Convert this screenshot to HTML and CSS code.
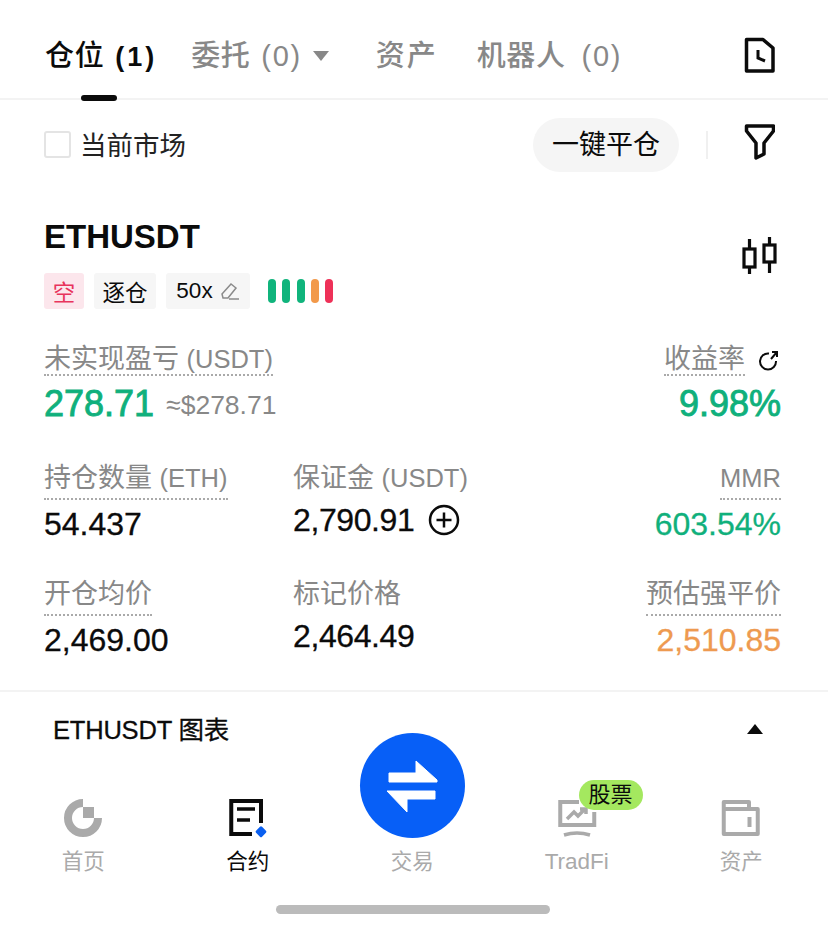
FILE: index.html
```html
<!DOCTYPE html>
<html lang="zh-CN">
<head>
    <meta charset="UTF-8" />
    <meta name="viewport" content="width=device-width, initial-scale=1.0" />
    <title>仓位</title>
    <link rel="stylesheet" href="styles.css">
</head>
<body>
    <div class="screen">
        <div class="tabs">
            <div class="tab tab-active">仓位 <b>(1)</b></div>
            <div class="tab tab-order">委托 <span class="count">(0)</span> <span class="caret"></span></div>
            <div class="tab tab-assets">资产</div>
            <div class="tab tab-bot">机器人 <span class="count">(0)</span></div>
            <svg class="tab-history" width="32" height="38" viewBox="0 0 32 38" fill="none" stroke="#0b0b0b" stroke-width="3.5">
                <path d="M3.5 4.5H20L30 13V36H3.5Z" stroke-linejoin="round"/>
                <path d="M15 15V23L22 26" stroke-width="3"/>
            </svg>
        </div>

        <div class="toolbar">
            <label class="check"><span class="check-box"></span><span class="check-text">当前市场</span></label>
            <div class="pill">一键平仓</div>
            <span class="toolbar-sep"></span>
            <svg class="filter" width="32" height="38" viewBox="0 0 32 38" fill="none" stroke="#0b0b0b" stroke-width="3.5" stroke-linejoin="round">
                <path d="M3.5 3H30.5V8L21 20V31L13 35V20L3.5 8Z"/>
            </svg>
        </div>

        <section class="position">
            <div class="symbol-row">
                <div>
                    <h2 class="symbol">ETHUSDT</h2>
                    <div class="tags">
                        <span class="tag tag-short">空</span>
                        <span class="tag tag-margin">逐仓</span>
                        <span class="tag tag-lev">50x
                            <svg width="20" height="20" viewBox="0 0 20 20" fill="none" stroke="#8a8a8a" stroke-width="1.5">
                                <path d="M2 13L11 3L16 7L8 17H3ZM9 18H19"/>
                            </svg>
                        </span>
                        <span class="risk">
                            <i class="g"></i><i class="g"></i><i class="g"></i><i class="o"></i><i class="r"></i>
                        </span>
                    </div>
                </div>
                <svg class="candles" width="36" height="38" viewBox="0 0 36 38" fill="none" stroke="#0b0b0b" stroke-width="3.2">
                    <rect x="2" y="12" width="11" height="18"/>
                    <path d="M7.5 2V12M7.5 30V37"/>
                    <rect x="22" y="8" width="11" height="17"/>
                    <path d="M27.5 0V8M27.5 25V36"/>
                </svg>
            </div>

            <div class="pnl">
                <div>
                    <span class="label dotted">未实现盈亏 <span class="unit">(USDT)</span></span>
                    <div class="pnl-val"><span class="big green">278.71</span><span class="approx">≈$278.71</span></div>
                </div>
                <div class="right">
                    <div class="roe-head">
                        <span class="label dotted">收益率</span>
                        <svg width="22" height="22" viewBox="0 0 22 22" fill="none" stroke="#0b0b0b" stroke-width="2">
                            <path d="M12 3.5A8 8 0 1 0 19 11M14 9L20 2M15 2H20V7"/>
                        </svg>
                    </div>
                    <div class="big green">9.98%</div>
                </div>
            </div>

            <div class="stats">
                <div class="stat">
                    <span class="label dotted">持仓数量 <span class="unit">(ETH)</span></span>
                    <div class="value">54.437</div>
                </div>
                <div class="stat">
                    <span class="label">保证金 <span class="unit">(USDT)</span></span>
                    <div class="value value-plain">2,790.91
                        <svg class="plus" width="32" height="32" viewBox="0 0 32 32" fill="none" stroke="#0b0b0b" stroke-width="2.5">
                            <circle cx="16" cy="16" r="14"/>
                            <path d="M16 8.5V23.5M8.5 16H23.5"/>
                        </svg>
                    </div>
                </div>
                <div class="stat right">
                    <span class="label dotted"><span class="unit">MMR</span></span>
                    <div class="value green">603.54%</div>
                </div>
                <div class="stat">
                    <span class="label dotted">开仓均价</span>
                    <div class="value">2,469.00</div>
                </div>
                <div class="stat">
                    <span class="label">标记价格</span>
                    <div class="value value-plain">2,464.49</div>
                </div>
                <div class="stat right">
                    <span class="label dotted">预估强平价</span>
                    <div class="value orange">2,510.85</div>
                </div>
            </div>
        </section>

        <div class="chart-row">
            <span class="chart-title">ETHUSDT 图表</span>
            <span class="chart-caret"></span>
        </div>

        <nav class="nav">
            <div class="nav-item">
                <svg width="40" height="40" viewBox="0 0 40 40" fill="none">
                    <path d="M20 5A15 15 0 1 0 35 20" stroke="#aaa" stroke-width="8"/>
                    <rect x="20" y="9" width="11" height="11" fill="#aaa"/>
                </svg>
                <span>首页</span>
            </div>
            <div class="nav-item nav-active">
                <svg width="40" height="40" viewBox="0 0 40 40" fill="none">
                    <path d="M24 36H3.25V3H33V25" stroke="#0b0b0b" stroke-width="4"/>
                    <path d="M9 11H27M9 22H22" stroke="#0b0b0b" stroke-width="3.5"/>
                    <rect x="28.75" y="29.5" width="8.5" height="8.5" rx="1.5" transform="rotate(45 33 33.75)" fill="#0a5ff0"/>
                </svg>
                <span>合约</span>
            </div>
            <div class="nav-item">
                <div class="trade-btn">
                    <svg width="52" height="56" viewBox="0 0 52 56" fill="#fff" stroke="#fff" stroke-linejoin="round">
                        <path d="M3 24H51V22L30 3V15H3ZM1 33H49V41H21V54Z"/>
                    </svg>
                </div>
                <span>交易</span>
            </div>
            <div class="nav-item nav-tradfi">
                <svg width="40" height="40" viewBox="0 0 40 40" fill="none" stroke="#aaa" stroke-width="4">
                    <path d="M22 4H3.25V27H37.25V14"/>
                    <path d="M7 37Q20 33 33 37" stroke-width="3.5"/>
                    <path d="M10 21L17 14L21 18L27 12M23 11H29V16" stroke-width="3.5"/>
                </svg>
                <span>TradFi</span>
                <em class="badge">股票</em>
            </div>
            <div class="nav-item">
                <svg width="40" height="40" viewBox="0 0 40 40" fill="none" stroke="#aaa" stroke-width="4">
                    <path d="M2.75 36V4H28V11H36.75V36Z" stroke-linejoin="round"/>
                    <path d="M2.75 11H28"/>
                    <path d="M28.5 19V29"/>
                </svg>
                <span>资产</span>
            </div>
        </nav>

        <div class="home-bar"></div>
    </div>
</body>
</html>
```

FILE: styles.css
```css
* {
    box-sizing: border-box;
}

body {
    margin: 0;
    background: #fff;
    color: #0b0b0b;
    font-family: "Liberation Sans", "Noto Sans CJK SC", sans-serif;
}

.screen {
    width: 828px;
    height: 929px;
    overflow: hidden;
}

.tabs {
    height: 100px;
    padding: 0 53px 0 45px;
    display: flex;
    align-items: center;
    border-bottom: 2px solid #f3f3f3;
    font-size: 29px;
    font-weight: 500;
    letter-spacing: 0.7px;
    word-spacing: 2px;
}

.tab {
    color: #888;
    margin-top: 8px;
    position: relative;
}

.tab-active {
    color: #0b0b0b;
}

.tab-active b {
    font-size: 27px;
    letter-spacing: 3px;
}

.tab-active::after {
    content: "";
    position: absolute;
    left: 36px;
    bottom: -27px;
    width: 36px;
    height: 6px;
    border-radius: 3px;
    background: #0b0b0b;
}

.count {
    letter-spacing: 1.7px;
}

.tab-order {
    margin-left: 34px;
}

.tab-assets {
    margin-left: 47px;
    letter-spacing: 2px;
}

.tab-bot {
    margin-left: 39px;
}

.tab-bot .count {
    margin-left: 5px;
}

.caret {
    display: inline-block;
    width: 0;
    height: 0;
    vertical-align: 5px;
    border-left: 8px solid transparent;
    border-right: 8px solid transparent;
    border-top: 10px solid #888;
}

.tab-history {
    margin: 10px 0 0 auto;
}

.toolbar {
    height: 90px;
    padding: 0 53px 0 44px;
    display: flex;
    align-items: center;
}

.check {
    display: flex;
    align-items: center;
    gap: 9px;
    padding-bottom: 2px;
    font-size: 26.5px;
    color: #222;
    margin-right: auto;
}

.check-text {
    padding-bottom: 1px;
}

.check-box {
    width: 27px;
    height: 27px;
    border: 2px solid #e4e4e4;
    border-radius: 3px;
}

.pill {
    width: 146px;
    height: 54px;
    border-radius: 27px;
    background: #f5f5f5;
    font-size: 27px;
    text-align: center;
    line-height: 54px;
}

.toolbar-sep {
    width: 2px;
    height: 28px;
    margin: 0 35px 0 27px;
    background: #f0f0f0;
}

.filter {
    margin-bottom: 6px;
}

.position {
    height: 502px;
    padding: 0 47px 0 44px;
    border-bottom: 2px solid #f3f3f3;
}

.symbol-row {
    display: flex;
    justify-content: space-between;
    padding-top: 29px;
}

.symbol {
    margin: 0 0 18px;
    font-size: 33px;
    line-height: 36px;
    font-weight: 700;
}

.candles {
    margin: 18px 3px 0 0;
}

.tags {
    display: flex;
    align-items: center;
    gap: 10px;
    font-size: 22.5px;
}

.tag {
    height: 36px;
    display: flex;
    align-items: center;
    justify-content: center;
    background: #f6f6f6;
    border-radius: 3px;
}

.tag-short {
    width: 40px;
    background: #fce6ec;
    color: #e8345c;
}

.tag-margin {
    width: 62px;
}

.tag-lev {
    width: 84px;
    gap: 7px;
}

.risk {
    display: flex;
    gap: 6.3px;
    margin-left: 8px;
}

.risk i {
    width: 8px;
    height: 24px;
    border-radius: 4px;
}

.risk .g {
    background: #10b47c;
}

.risk .o {
    background: #f2994a;
}

.risk .r {
    background: #ee3158;
}

.label {
    display: inline-block;
    vertical-align: top;
    font-size: 27px;
    line-height: 32px;
    color: #888;
}

.unit {
    font-size: 25.5px;
}

.dotted {
    border-bottom: 2px dotted #aaa;
    padding-bottom: 4px;
}

.green {
    color: #10b07c;
}

.orange {
    color: #ee9a50;
}

.right {
    text-align: right;
}

.pnl {
    display: flex;
    justify-content: space-between;
    margin-top: 36px;
}

.pnl .label {
    line-height: 29px;
    padding-bottom: 0;
}

.pnl-val {
    display: flex;
    align-items: center;
    gap: 12px;
    margin-top: 3px;
}

.big {
    font-size: 36px;
    line-height: 50px;
    -webkit-text-stroke: 0.9px currentColor;
}

.right .big {
    margin-top: 3px;
}

.approx {
    margin-top: 2px;
    font-size: 26.5px;
    color: #888;
}

.roe-head {
    display: flex;
    align-items: center;
    gap: 12px;
    margin-right: 2px;
}

.stats {
    display: grid;
    grid-template-columns: 249px 1fr auto;
    grid-auto-rows: 116px;
    margin-top: 33px;
}

.value {
    margin-top: 1px;
    font-size: 32px;
    line-height: 46px;
    -webkit-text-stroke: 0.3px currentColor;
}

.value-plain {
    margin-top: 3px;
    display: flex;
    align-items: center;
    gap: 14px;
    letter-spacing: -0.4px;
}

.chart-row {
    height: 74px;
    padding: 0 65px 0 53px;
    display: flex;
    align-items: center;
    justify-content: space-between;
    font-size: 25.5px;
    -webkit-text-stroke: 0.3px currentColor;
}

.chart-title {
    padding-bottom: 4px;
    letter-spacing: -0.2px;
}

.chart-caret {
    width: 0;
    height: 0;
    border-left: 8px solid transparent;
    border-right: 8px solid transparent;
    border-bottom: 10px solid #0b0b0b;
}

.nav {
    height: 109px;
    display: flex;
    align-items: flex-end;
    padding: 0 1px;
}

.nav-item {
    flex: 0 0 164.5px;
    display: flex;
    flex-direction: column;
    align-items: center;
    gap: 11px;
    font-size: 21.5px;
    line-height: 26px;
    color: #aaa;
    position: relative;
}

.nav-active {
    color: #0b0b0b;
}

.nav-tradfi span {
    font-size: 22.5px;
}

.trade-btn {
    width: 105px;
    height: 105px;
    border-radius: 50%;
    background: #075ff7;
    display: flex;
    align-items: center;
    justify-content: center;
}

.badge {
    position: absolute;
    left: 84px;
    top: -18px;
    width: 64px;
    height: 30px;
    border-radius: 15px;
    background: #a4e85f;
    color: #0b0b0b;
    font-size: 22px;
    font-style: normal;
    line-height: 29px;
    text-align: center;
}

.home-bar {
    width: 274px;
    height: 9px;
    margin: 30px 0 0 276px;
    border-radius: 5px;
    background: #bbb;
}
```
